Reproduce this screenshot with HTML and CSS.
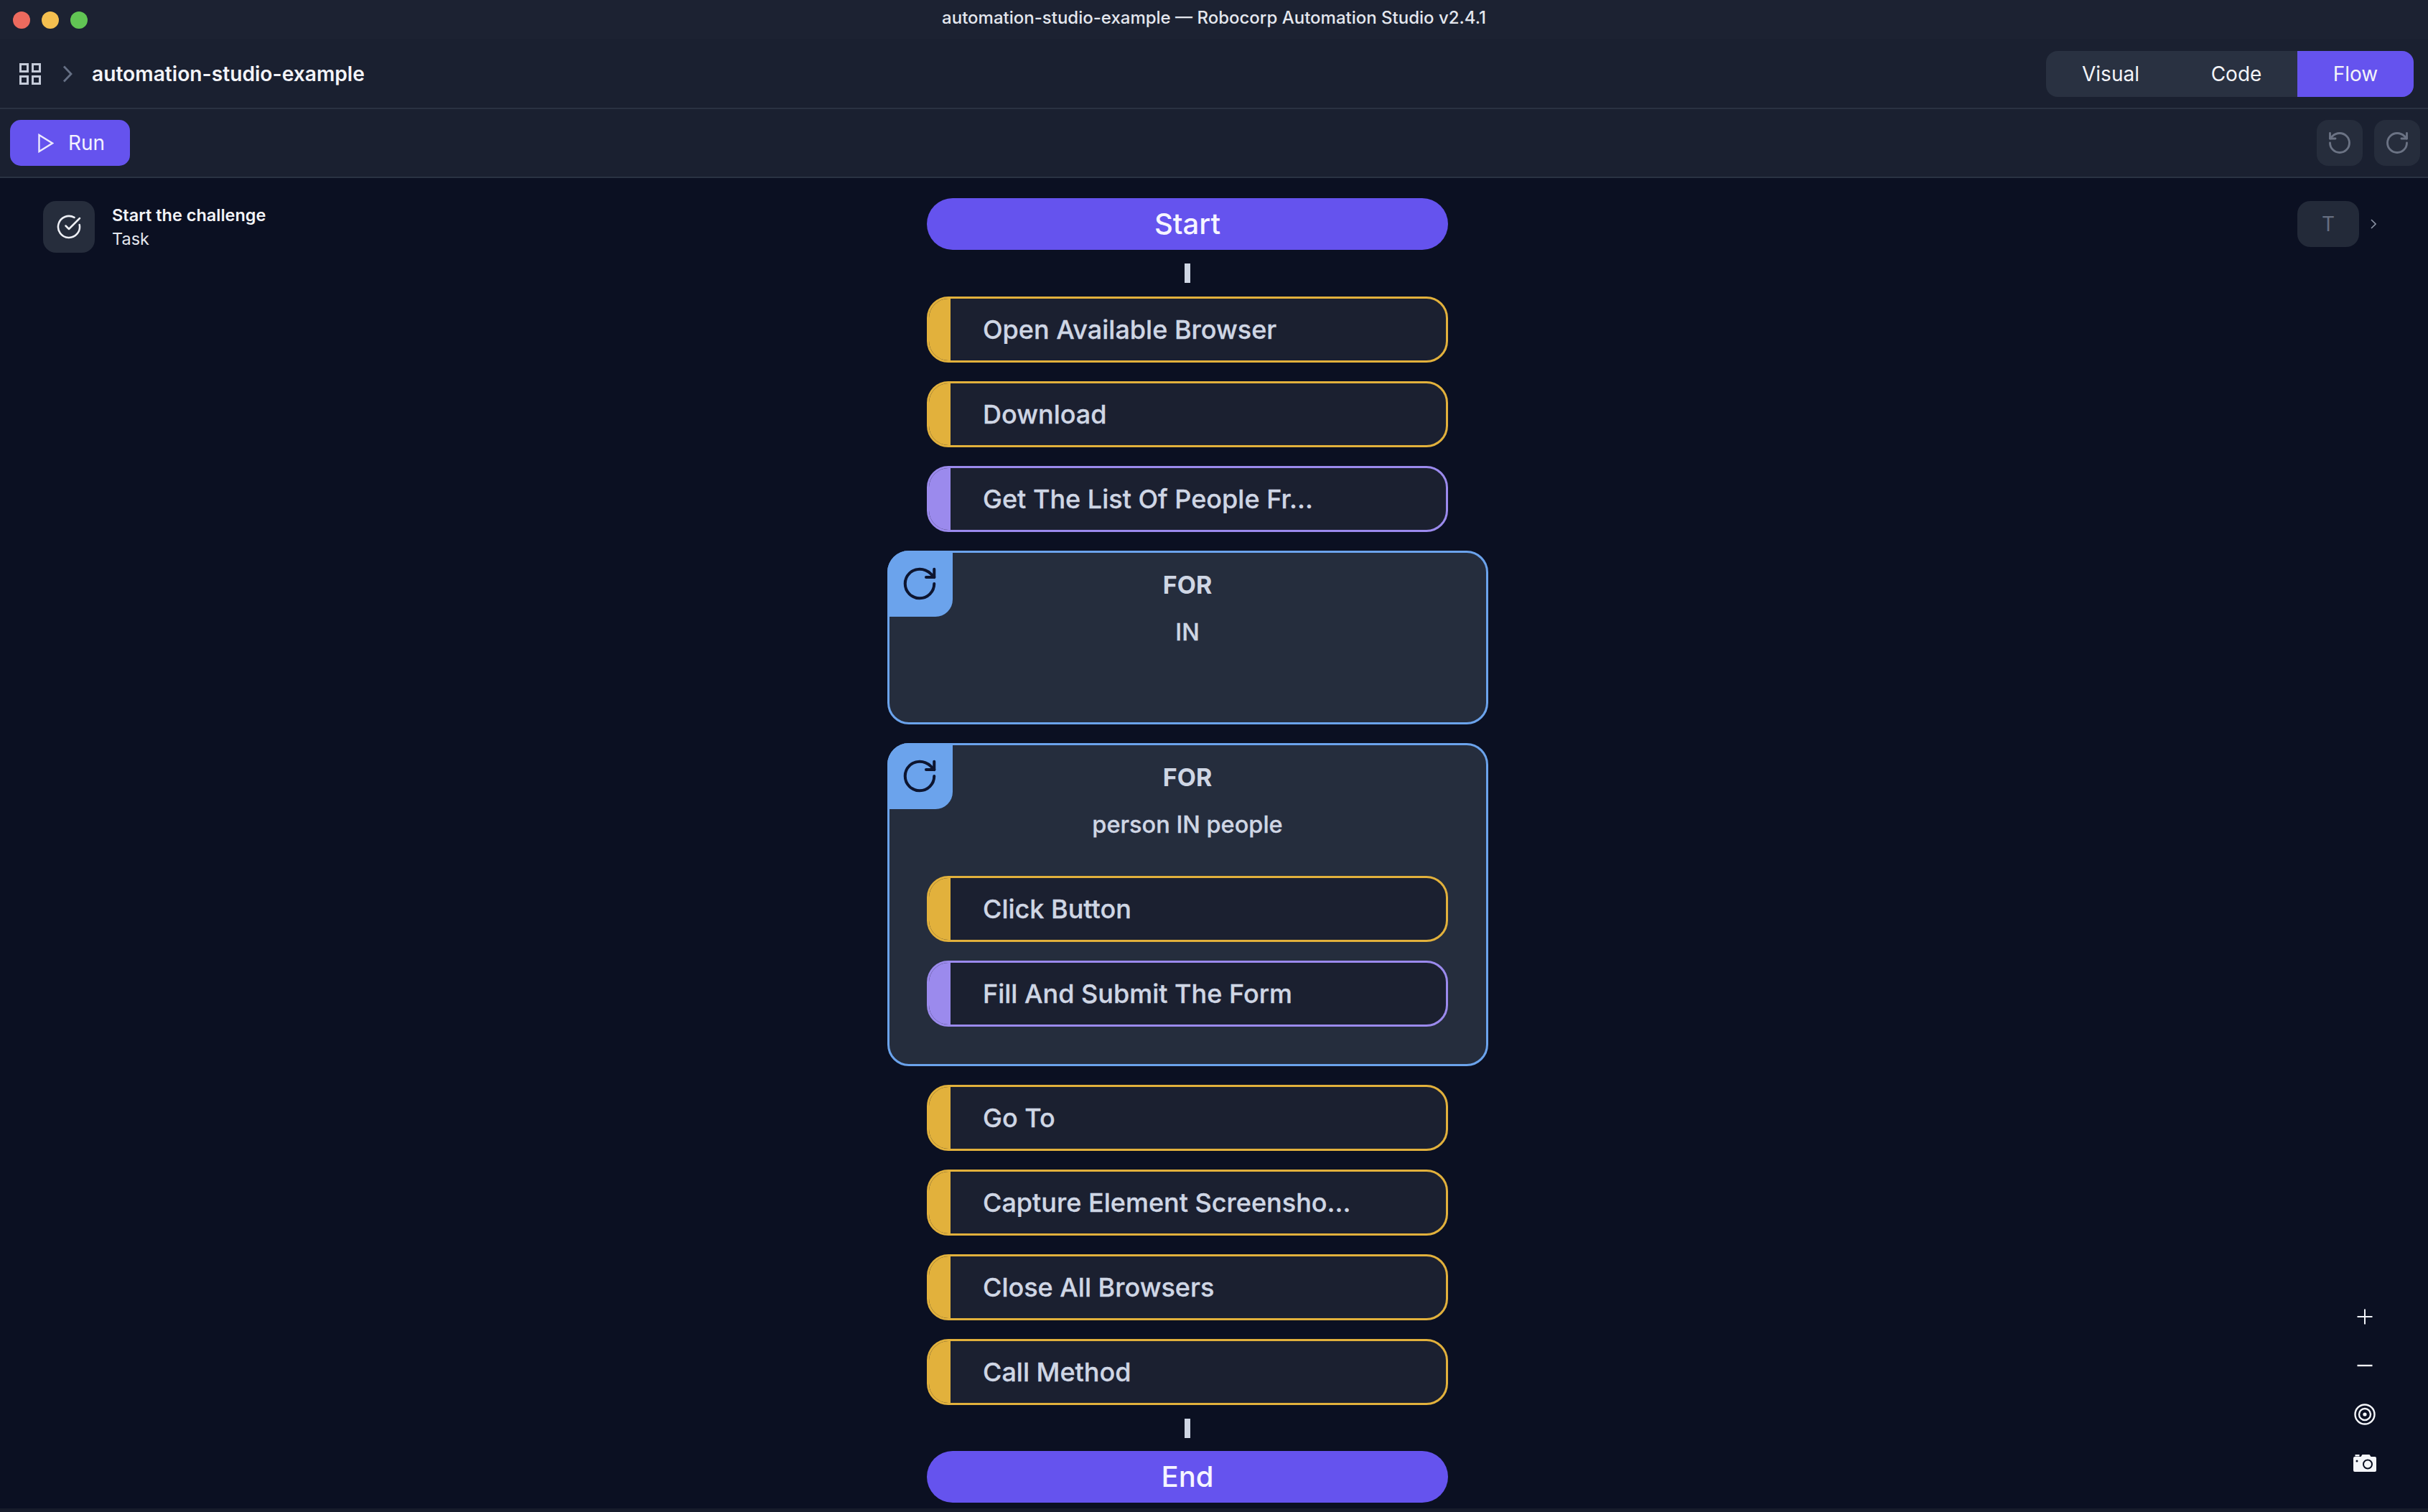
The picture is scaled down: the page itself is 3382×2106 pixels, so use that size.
FILE: index.html
```html
<!DOCTYPE html>
<html lang="en">
<head>
    <meta charset="UTF-8">
    <title>automation-studio-example — Robocorp Automation Studio v2.4.1</title>
    <link rel="stylesheet" href="styles.css">
</head>
<body>
    <header class="titlebar">
        <div class="traffic">
            <span class="dot dot-red"></span>
            <span class="dot dot-yellow"></span>
            <span class="dot dot-green"></span>
        </div>
        <div class="window-title">automation-studio-example — Robocorp Automation Studio v2.4.1</div>
    </header>

    <div class="projectbar">
        <div class="crumbs">
            <svg class="grid-icon" viewBox="0 0 30 30" fill="none" stroke="#c5cbd9" stroke-width="3">
                <rect x="1.5" y="1.5" width="10" height="10"/>
                <rect x="18.500" y="1.5" width="10" height="10"/>
                <rect x="1.5" y="18.500" width="10" height="10"/>
                <rect x="18.500" y="18.500" width="10" height="10"/>
            </svg>
            <svg class="crumb-chevron" viewBox="0 0 14 24" fill="none" stroke="#667085" stroke-width="2.8">
                <path d="M2 1.5 12 12 2 22.500"/>
            </svg>
            <span class="project-name">automation-studio-example</span>
        </div>
        <div class="segment">
            <span class="segment-item seg-visual">Visual</span>
            <span class="segment-item seg-code">Code</span>
            <span class="segment-item seg-flow">Flow</span>
        </div>
    </div>

    <div class="toolbar">
        <button class="run-btn">
            <svg class="play-icon" viewBox="0 0 22 27" fill="none" stroke="#eceafd" stroke-width="2.4">
                <path d="M1.5 2 20 13.500 1.5 25Z"/>
            </svg>
            Run
        </button>
        <div class="history">
            <span class="history-btn">
                <svg viewBox="0 0 24 24" fill="none" stroke="#6b7384" stroke-width="1.9" stroke-linecap="round" stroke-linejoin="round">
                    <path d="M3 12a9 9 0 1 0 9-9 9.75 9.75 0 0 0-6.74 2.74L3 8"/>
                    <path d="M3 3v5h5"/>
                </svg>
            </span>
            <span class="history-btn">
                <svg viewBox="0 0 24 24" fill="none" stroke="#6b7384" stroke-width="1.9" stroke-linecap="round" stroke-linejoin="round">
                    <path d="M21 12a9 9 0 1 1-9-9c2.52 0 4.93 1 6.74 2.74L21 8"/>
                    <path d="M21 3v5h-5"/>
                </svg>
            </span>
        </div>
    </div>

    <main class="canvas">
        <div class="task-card">
            <span class="task-icon">
                <svg viewBox="0 0 24 24" fill="none" stroke="#eef0f6" stroke-width="1.7" stroke-linecap="round" stroke-linejoin="round">
                    <path d="M21.8 10A10 10 0 1 1 17 3.300"/>
                    <path d="m9 11 3 3L22 4"/>
                </svg>
            </span>
            <div class="task-text">
                <div class="task-name">Start the challenge</div>
                <div class="task-kind">Task</div>
            </div>
        </div>

        <div class="outline-toggle">
            <span class="outline-btn">T</span>
            <svg class="outline-chevron" viewBox="0 0 8 14" fill="none" stroke="#8a92a3" stroke-width="1.6">
                <path d="M1 1 7 7 1 13"/>
            </svg>
        </div>

        <div class="flow">
            <div class="pill">Start</div>
            <div class="connector"></div>

            <div class="node node-lib"><span class="band"></span><span class="node-label">Open Available Browser</span></div>
            <div class="node node-lib"><span class="band"></span><span class="node-label">Download</span></div>
            <div class="node node-user"><span class="band"></span><span class="node-label">Get The List Of People Fr...</span></div>

            <div class="loop loop-empty">
                <span class="loop-tab">
                    <svg viewBox="0 0 24 24" fill="none" stroke="#0d1530" stroke-width="1.8" stroke-linecap="round" stroke-linejoin="round">
                        <path d="M21 12a9 9 0 1 1-9-9c2.52 0 4.93 1 6.74 2.74L21 8"/>
                        <path d="M21 3v5h-5"/>
                    </svg>
                </span>
                <div class="loop-title">FOR</div>
                <div class="loop-expr">IN</div>
            </div>

            <div class="loop">
                <span class="loop-tab">
                    <svg viewBox="0 0 24 24" fill="none" stroke="#0d1530" stroke-width="1.8" stroke-linecap="round" stroke-linejoin="round">
                        <path d="M21 12a9 9 0 1 1-9-9c2.52 0 4.93 1 6.74 2.74L21 8"/>
                        <path d="M21 3v5h-5"/>
                    </svg>
                </span>
                <div class="loop-title">FOR</div>
                <div class="loop-expr">person IN people</div>
                <div class="loop-body">
                    <div class="node node-lib"><span class="band"></span><span class="node-label">Click Button</span></div>
                    <div class="node node-user"><span class="band"></span><span class="node-label">Fill And Submit The Form</span></div>
                </div>
            </div>

            <div class="node node-lib"><span class="band"></span><span class="node-label">Go To</span></div>
            <div class="node node-lib"><span class="band"></span><span class="node-label">Capture Element Screensho...</span></div>
            <div class="node node-lib"><span class="band"></span><span class="node-label">Close All Browsers</span></div>
            <div class="node node-lib"><span class="band"></span><span class="node-label">Call Method</span></div>

            <div class="connector connector-end"></div>
            <div class="pill">End</div>
        </div>

        <div class="canvas-tools">
            <svg viewBox="0 0 32 32" fill="none" stroke="#f1f3f8" stroke-width="2">
                <path d="M16 5.500v21M5.500 16h21"/>
            </svg>
            <svg viewBox="0 0 32 32" fill="none" stroke="#f1f3f8" stroke-width="2.4">
                <path d="M5.500 16h21"/>
            </svg>
            <svg viewBox="0 0 32 32" fill="none" stroke="#f4f6fa" stroke-width="2.4">
                <circle cx="16" cy="16" r="13.500"/>
                <circle cx="16" cy="16" r="8"/>
                <circle cx="16" cy="16" r="2.600" fill="#f4f6fa" stroke="none"/>
            </svg>
            <svg viewBox="0 -3 32 32">
                <path fill="#f4f6fa" fill-rule="evenodd" d="M2.500 1h6v2.500h-6ZM2 4h8.500l2-3h10l2 3H30a2 2 0 0 1 2 2v17a2 2 0 0 1-2 2H2a2 2 0 0 1-2-2V6a2 2 0 0 1 2-2ZM20 7.500a7 7 0 1 0 0 14 7 7 0 0 0 0-14Zm0 2a5 5 0 1 1 0 10 5 5 0 0 1 0-10ZM5 8.500a1.500 1.500 0 1 0 0 3 1.500 1.500 0 0 0 0-3Z"/>
            </svg>
        </div>
    </main>

    <div class="statusbar"></div>
</body>
</html>
```

FILE: styles.css
```css
* {
    box-sizing: border-box;
}
html, body {
    height: 100%;
}
body {
    margin: 0;
    background-color: #0b1022;
    color: #cfd6e4;
    font-family: Inter, "Liberation Sans", sans-serif;
    display: flex;
    flex-direction: column;
    overflow: hidden;
}

/* window chrome */
.titlebar {
    height: 54px;
    background-color: #1c2232;
    display: flex;
    align-items: center;
    justify-content: center;
    position: relative;
    flex-shrink: 0;
}
.traffic {
    position: absolute;
    left: 18px;
    top: 16px;
    display: flex;
    gap: 16px;
}
.dot {
    width: 24px;
    height: 24px;
    border-radius: 50%;
}
.dot-red { background-color: #ec6a5e; }
.dot-yellow { background-color: #f4bf4f; }
.dot-green { background-color: #61c554; }
.window-title {
    font-size: 24px;
    font-weight: 500;
    color: #e4e7ee;
    margin-top: -6px;
}

.projectbar {
    height: 98px;
    padding: 17px 20px 15px 27px;
    background-color: #1a2030;
    border-bottom: 2px solid #2a3242;
    display: flex;
    align-items: center;
    justify-content: space-between;
    flex-shrink: 0;
}
.crumbs {
    display: flex;
    align-items: center;
}
.grid-icon {
    width: 30px;
    height: 30px;
}
.crumb-chevron {
    width: 14px;
    height: 24px;
    margin: 0 27px 0 30px;
}
.project-name {
    font-size: 28.200px;
    font-weight: 600;
    color: #f3f4f8;
}
.segment {
    display: flex;
    height: 64px;
    width: 512px;
    border-radius: 16px;
    background-color: #293141;
    overflow: hidden;
    font-size: 28px;
    color: #f3f4f8;
}
.segment-item {
    display: flex;
    align-items: center;
    justify-content: center;
}
.seg-visual { width: 180px; }
.seg-code { width: 170px; }
.seg-flow {
    width: 162px;
    background-color: #6553ee;
}

.toolbar {
    height: 96px;
    padding: 0 11px 0 14px;
    background-color: #1a2030;
    border-bottom: 2px solid #2a3242;
    display: flex;
    align-items: center;
    justify-content: space-between;
    flex-shrink: 0;
}
.run-btn {
    width: 167px;
    height: 64px;
    border: none;
    border-radius: 15px;
    background-color: #6553ee;
    color: #f3f2fe;
    font-family: inherit;
    font-size: 28px;
    display: flex;
    align-items: center;
    padding: 0 0 0 39px;
    gap: 20px;
}
.play-icon {
    width: 22px;
    height: 27px;
}
.history {
    display: flex;
    gap: 16px;
}
.history-btn {
    width: 64px;
    height: 64px;
    border-radius: 16px;
    background-color: #262d3c;
    display: flex;
    align-items: center;
    justify-content: center;
}
.history-btn svg {
    width: 36px;
    height: 36px;
}

/* canvas */
.canvas {
    flex: 1;
    position: relative;
    padding-right: 74px;
    display: flex;
    justify-content: center;
    min-height: 0;
}
.task-card {
    position: absolute;
    left: 60px;
    top: 32px;
    display: flex;
    align-items: center;
    gap: 24px;
}
.task-icon {
    width: 72px;
    height: 72px;
    border-radius: 18px;
    background-color: #262d3c;
    display: flex;
    align-items: center;
    justify-content: center;
}
.task-icon svg {
    width: 36px;
    height: 36px;
}
.task-name {
    font-size: 23.500px;
    font-weight: 600;
    color: #f3f4f8;
    margin-bottom: 4px;
}
.task-kind {
    font-size: 23.500px;
    color: #e4e7ee;
}
.outline-toggle {
    position: absolute;
    left: 3200px;
    top: 32px;
    display: flex;
    align-items: center;
    gap: 16px;
}
.outline-btn {
    width: 86px;
    height: 64px;
    border-radius: 18px;
    background-color: #232a39;
    color: #666e80;
    font-size: 28px;
    display: flex;
    align-items: center;
    justify-content: center;
}
.outline-chevron {
    width: 8px;
    height: 14px;
}

.flow {
    width: 837px;
    padding-top: 28px;
    display: flex;
    flex-direction: column;
    align-items: center;
    gap: 26px;
}
.pill {
    width: 726px;
    height: 72px;
    border-radius: 36px;
    background-color: #6553ee;
    color: #f6f5ff;
    font-size: 40px;
    font-weight: 500;
    display: flex;
    align-items: center;
    justify-content: center;
    padding-bottom: 2px;
    flex-shrink: 0;
}
.connector {
    width: 8px;
    height: 27px;
    background-color: #cfd6e4;
    margin: -7px 0;
    flex-shrink: 0;
}
.connector-end {
    margin: -7px 0 -8px;
}
.node {
    width: 726px;
    height: 92px;
    border: 3px solid;
    border-radius: 30px;
    background-color: #1b2030;
    display: flex;
    align-items: center;
    overflow: hidden;
    flex-shrink: 0;
}
.band {
    width: 30px;
    align-self: stretch;
}
.node-label {
    padding-left: 45px;
    font-size: 36px;
    font-weight: 500;
    color: #cfd6e4;
    white-space: nowrap;
    -webkit-text-stroke: 0.3px #cfd6e4;
}
.node-lib { border-color: #e2b13c; }
.node-lib .band { background-color: #e2b13c; }
.node-user { border-color: #9b8aed; }
.node-user .band { background-color: #9b8aed; }

.loop {
    width: 837px;
    border: 3px solid #6ba3ec;
    border-radius: 30px;
    background-color: #252d3d;
    position: relative;
    display: flex;
    flex-direction: column;
    align-items: center;
    padding-top: 24px;
    padding-bottom: 52px;
    flex-shrink: 0;
}
.loop-empty {
    height: 242px;
    padding-bottom: 0;
}
.loop-tab {
    position: absolute;
    left: -3px;
    top: -3px;
    width: 91px;
    height: 92px;
    background-color: #6ba3ec;
    border-radius: 30px 0 24px 0;
    display: flex;
    align-items: center;
    justify-content: center;
}
.loop-tab svg {
    width: 58px;
    height: 54px;
}
.loop-title {
    font-size: 34px;
    font-weight: 700;
    line-height: 42px;
}
.loop-expr {
    font-size: 32.500px;
    font-weight: 500;
    line-height: 42px;
    margin-top: 24px;
    -webkit-text-stroke: 0.3px #cfd6e4;
}
.loop-body {
    margin-top: 50px;
    display: flex;
    flex-direction: column;
    gap: 26px;
}

.canvas-tools {
    position: absolute;
    left: 3278px;
    top: 1570px;
    width: 32px;
    display: flex;
    flex-direction: column;
    gap: 36px;
}
.canvas-tools svg {
    width: 32px;
    height: 32px;
}

.statusbar {
    height: 5px;
    background-color: #161b2b;
    flex-shrink: 0;
}
```
